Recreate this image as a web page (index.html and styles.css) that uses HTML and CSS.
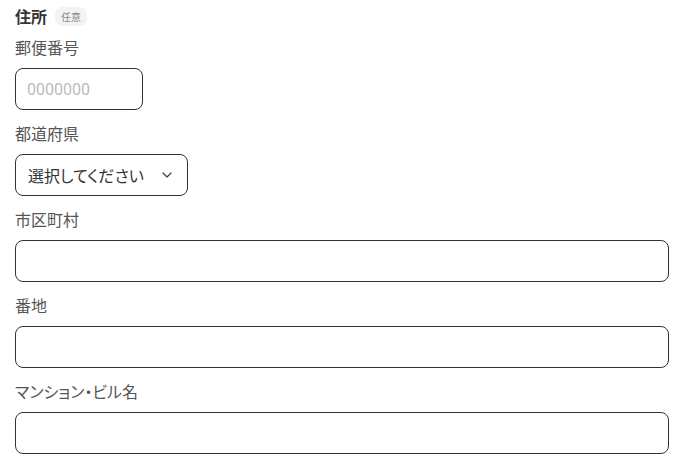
FILE: index.html
```html
<!DOCTYPE html>
<html lang="ja">
<head>
<meta charset="utf-8">
<link rel="stylesheet" href="styles.css">
</head>
<body>
<div class="form">
  <div class="heading">
    <span class="title">住所</span>
    <span class="badge">任意</span>
  </div>
  <div class="field">
    <div class="label">郵便番号</div>
    <div class="input input-zip"><span class="placeholder">0000000</span></div>
  </div>
  <div class="field">
    <div class="label">都道府県</div>
    <div class="input input-select">
      <span class="select-text">選択してください</span>
      <svg class="chevron" width="10" height="6" viewBox="0 0 10 6"><path d="M1 1 L5 5 L9 1" fill="none" stroke="#444" stroke-width="1.3" stroke-linecap="round" stroke-linejoin="round"/></svg>
    </div>
  </div>
  <div class="field">
    <div class="label">市区町村</div>
    <div class="input input-full"></div>
  </div>
  <div class="field">
    <div class="label">番地</div>
    <div class="input input-full"></div>
  </div>
  <div class="field">
    <div class="label">マンション・ビル名</div>
    <div class="input input-full"></div>
  </div>
</div>
</body>
</html>
```
FILE: styles.css
```css
html, body {
  margin: 0;
  padding: 0;
  background: #fff;
}
body {
  font-family: "Noto Sans CJK JP", "Noto Sans", sans-serif;
  font-feature-settings: "palt";
  color: #333;
}
.form {
  padding: 5px 17px 0 15px;
  display: flex;
  flex-direction: column;
}
.heading {
  display: flex;
  align-items: center;
  gap: 8px;
  height: 22px;
  margin-bottom: 9px;
}
.title {
  font-size: 16px;
  font-weight: 700;
  color: #333;
  line-height: 22px;
}
.badge {
  font-size: 10px;
  line-height: 19px;
  padding: 0 6px;
  background: #f3f3f3;
  color: #888;
  border-radius: 7px;
}
.field {
  display: flex;
  flex-direction: column;
  align-items: flex-start;
  margin-bottom: 12px;
}
.label {
  font-size: 16px;
  line-height: 22px;
  color: #555;
  margin-bottom: 10px;
}
.input {
  box-sizing: border-box;
  height: 42px;
  border: 1px solid #333;
  border-radius: 8px;
  display: flex;
  align-items: center;
  padding: 0 11px;
  background: #fff;
}
.input-zip {
  width: 128px;
}
.placeholder {
  font-family: Roboto, "Noto Sans CJK JP", sans-serif;
  font-size: 16px;
  color: #bbb;
}
.input-select {
  width: 173px;
  padding: 0 15px 0 12px;
  justify-content: space-between;
}
.select-text {
  font-size: 16px;
  color: #333;
}
.chevron {
  display: block;
}
.input-full {
  align-self: stretch;
}
```
